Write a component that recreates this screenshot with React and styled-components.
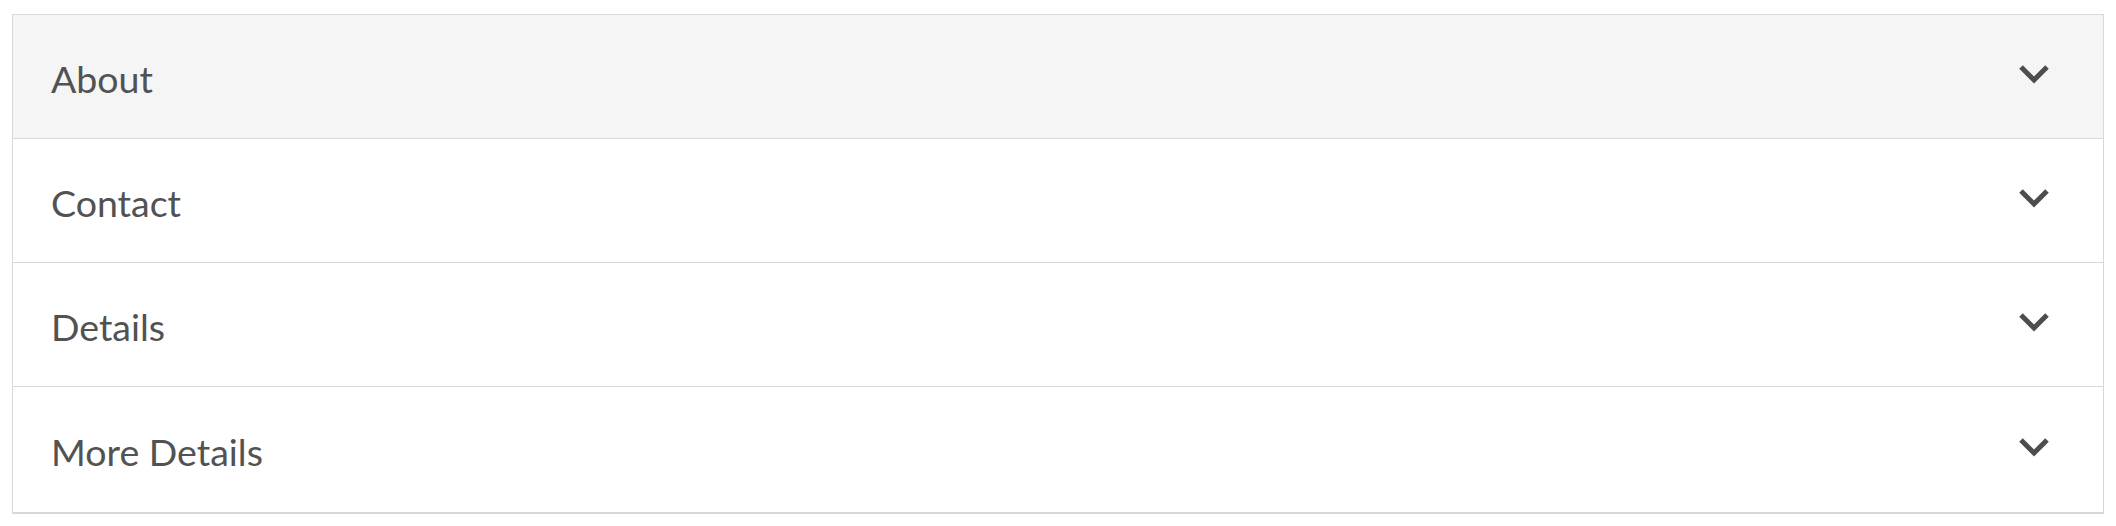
import React, { useState } from "react";
import styled, { createGlobalStyle } from "styled-components";

const GlobalStyle = createGlobalStyle`
  html, body {
    margin: 0;
    padding: 0;
    background: #fff;
    font-family: "Lato", "Noto Sans", sans-serif;
  }
`;

const Page = styled.div`
  padding: 14px 12px 12px 12px;
`;

const Accordion = styled.div`
  border: 1px solid #d8d8d8;
  border-bottom-width: 2px;
  display: flex;
  flex-direction: column;
`;

const Item = styled.div`
  & + & {
    border-top: 1px solid #d8d8d8;
  }
`;

const Header = styled.button`
  display: flex;
  align-items: center;
  justify-content: space-between;
  width: 100%;
  height: ${({ last }) => (last ? "125px" : "123px")};
  padding: 0 52px 0 38px;
  border: none;
  margin: 0;
  background: ${({ active }) => (active ? "#f5f5f5" : "#fff")};
  color: #525252;
  font-family: "Lato", "Noto Sans", sans-serif;
  font-size: 37.5px;
  font-weight: 400;
  text-align: left;
  cursor: pointer;
  outline: none;
`;

const Title = styled.span`
  padding-top: 3px;
`;

const Chevron = styled.svg`
  width: 34px;
  height: 22px;
  margin-top: -6px;
  stroke: #4d4d4d;
`;

const items = ["About", "Contact", "Details", "More Details"];

const App = () => {
  const [active] = useState(0);
  return (
    <Page>
      <GlobalStyle />
      <Accordion>
        {items.map((label, i) => (
          <Item key={label}>
            <Header active={i === active} last={i === items.length - 1}>
              <Title>{label}</Title>
              <Chevron viewBox="0 0 34 22" fill="none">
                <polyline points="4,4 17,17 30,4" strokeWidth="5" />
              </Chevron>
            </Header>
          </Item>
        ))}
      </Accordion>
    </Page>
  );
};

export default App;
